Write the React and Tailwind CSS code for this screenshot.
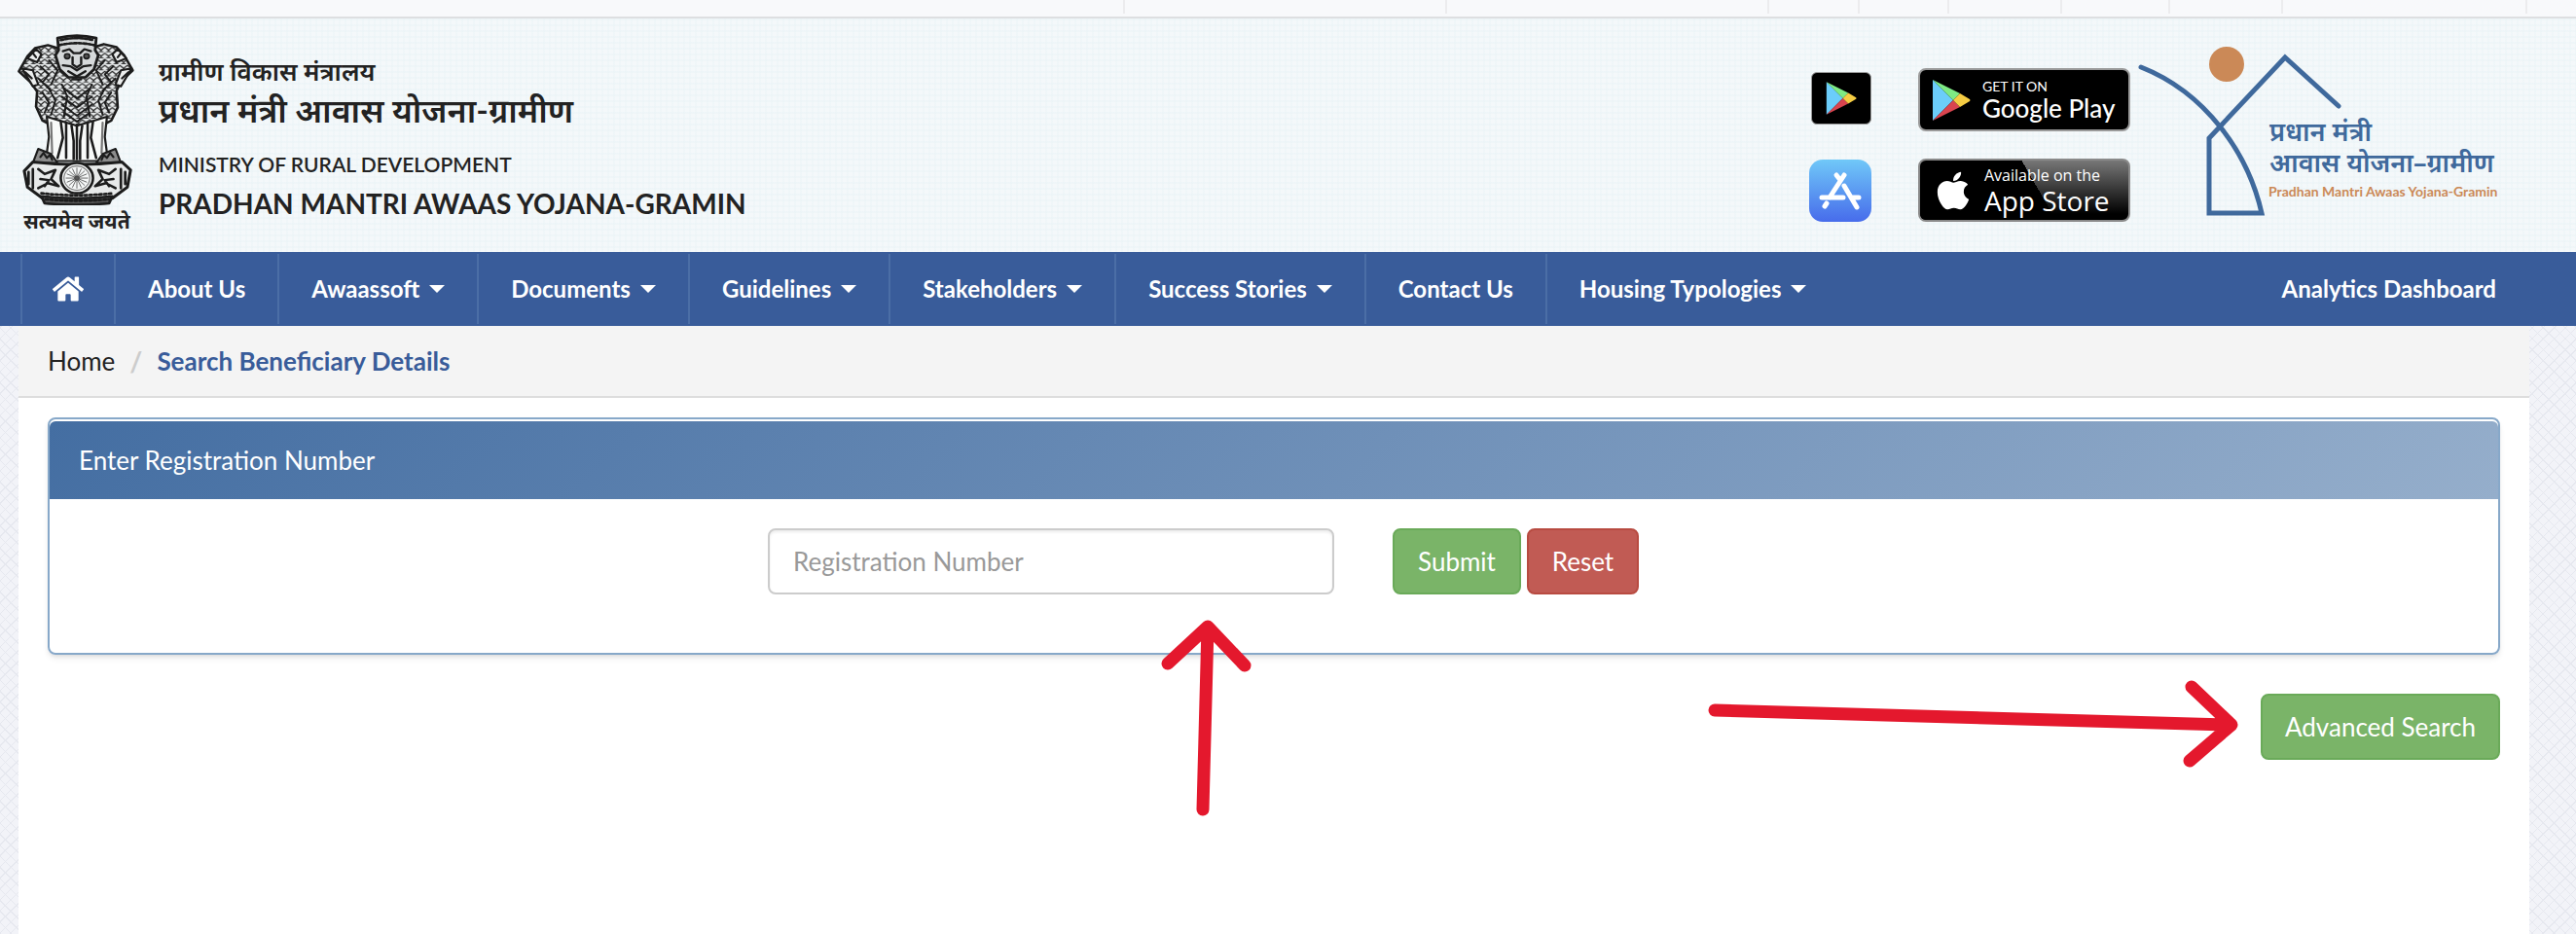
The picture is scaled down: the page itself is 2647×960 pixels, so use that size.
import { FaHome, FaApple } from "react-icons/fa";

const NAV_ITEMS = [
  { label: "About Us" },
  { label: "Awaassoft", menu: true },
  { label: "Documents", menu: true },
  { label: "Guidelines", menu: true },
  { label: "Stakeholders", menu: true },
  { label: "Success Stories", menu: true },
  { label: "Contact Us" },
  { label: "Housing Typologies", menu: true },
];

// cell widths of the strip above the header, left to right
const STRIP_CELLS = ["w-[1156px]", "w-[331px]", "w-[331px]", "w-[93px]", "w-[92px]", "w-[116px]", "w-[111px]", "w-[116px]", "w-[251px]"];

const LION_FUR = [
  "M24 32l8 8-6 8M32 26l8 10-6 14M22 44l12 12M92 32l-8 8 6 8M84 26l-8 10 6 14M94 44l-12 12",
  "M26 58l6 10-4 10M32 54l6 12-4 14M44 50l5 12-3 20M90 58l-6 10 4 10M84 54l-6 12 4 14M72 50l-5 12 3 20",
  "M46 54l12 10 12-10M44 62l14 11 14-11M44 70l14 11 14-11M46 78l12 9 12-9",
];

const BODY = "M40 14l-9-3-12 3-7 8-8 15 11 11 6 9-1 15 6 14 9 5 8 2q15 7 30 0l8-2 9-5 6-13-1-17 4-9 11-11-8-15-7-8-12-3-9 3z";

function Emblem() {
  return (
    <svg viewBox="0 0 116 170" preserveAspectRatio="none" className="h-[176px] w-32 shrink-0" fill="none" stroke="#1c1c1c" strokeLinecap="round" strokeLinejoin="round" aria-hidden="true">
      <defs>
        <pattern id="fur" width="7" height="6" patternUnits="userSpaceOnUse">
          <path d="M0 1l3.5 3L7 1M0 7l3.5-2L7 7" stroke="#1c1c1c" strokeWidth="1.2" />
        </pattern>
      </defs>
      <path d={BODY} fill="#e6e9ea" strokeWidth="2.4" />
      <path d={BODY} fill="url(#fur)" stroke="none" />
      {LION_FUR.map((d) => (
        <path key={d} d={d} strokeWidth="1.8" />
      ))}
      <path d="M7 34l10 2 5 14-5 2zM109 34l-10 2-5 14 5 2zM12 24l9 4 4-8-5-5zM104 24l-9 4-4-8 5-5z" fill="#eceeee" strokeWidth="2" />
      <path d="M10 38l6 6M106 38l-6 6M17 19l3 4M99 19l-3 4" strokeWidth="2" />
      <path d="M40 4q18-5 36 0l-1 12 3 5-4 14-8 8H50l-8-8-4-14 3-5z" fill="#d6d9da" strokeWidth="2.6" />
      <path d="M43 6q15-4 30 0M42 11q16-4 32 0" strokeWidth="2.6" strokeDasharray="2.5 2" />
      <path d="M45 17l6-2 4 4h6l4-4 6 2M54 23v7l4 3 4-3v-7M45 31l7 1 6 4 6-4 7-1M50 37l8 5 8-5M54 45h8" strokeWidth="2.2" />
      <circle cx="49" cy="22" r="2.5" fill="#555" strokeWidth="1.5" />
      <circle cx="67" cy="22" r="2.5" fill="#555" strokeWidth="1.5" />
      <path d="M30 82l2 20-3 24h58l-3-24 2-20-12 4-16 5-16-5z" fill="#f8faf9" strokeWidth="2" />
      <path d="M43 87l2 16-5 20M48 88v35M53 91l2 15v18M58 90v34M63 91l-2 15v18M68 88v35M73 87l-2 16 5 20" strokeWidth="2.3" />
      <path d="M34 88l1 30M82 88l-1 30" strokeWidth="2" stroke="#777" />
      <path d="M22 114l12 5 6 9H17zM94 114l-12 5-6 9h23z" fill="#8c8c8c" strokeWidth="2" />
      <path d="M24 122l3-4 3 5 3-3 2 5M92 122l-3-4-3 5-3-3-2 5" strokeWidth="2" />
      <path d="M17 127q41 5 83 0l8 8-3 17-14 11q-32 5-65 0l-14-11-3-16z" fill="#e8eaea" strokeWidth="2.8" />
      <path d="M25 161l3 7q29 3 60 0l3-7q-33 4-66 0z" fill="#555" strokeWidth="2.5" />
      <path d="M25 158q33 4 67 0M29 164q29 3 59 0" strokeWidth="2.6" strokeDasharray="2 2.5" />
      <circle cx="58" cy="143" r="15" fill="#f4f6f6" strokeWidth="2.4" />
      <circle cx="58" cy="143" r="12" strokeWidth="1" stroke="#777" />
      <circle cx="58" cy="143" r="2" fill="#1c1c1c" />
      <path d="M58 133v20M48 143h20M51 136l14 14M65 136l-14 14M54 134l8 18M62 134l-8 18M49 139l18 8M67 139l-18 8" strokeWidth=".8" stroke="#555" />
      <path d="M22 134l6 5 10-4-4 9 7 7-10-3-9 5M24 144l8 1-4 6M94 134l-6 5-10-4 4 9-7 7 10-3 9 5M92 144l-8 1 4 6M13 137v12M17 134v19M103 137v12M99 134v19" strokeWidth="2.4" />
    </svg>
  );
}

function PlayMark({ className }) {
  return (
    <svg viewBox="0 0 40 44" className={className} aria-hidden="true">
      <path d="M1 1v42l21-21z" fill="#6bcdfa" />
      <path d="M1 1l21 21 7-7z" fill="#7eea84" />
      <path d="M1 43l21-21 7 7z" fill="#d9444f" />
      <path d="M29 15l-7 7 7 7 10-6q1-1 0-2z" fill="#f5cc43" />
    </svg>
  );
}

function AppStoreIcon() {
  return (
    <svg viewBox="0 0 64 64" className="size-16" aria-hidden="true">
      <defs>
        <linearGradient id="appstore" x2="0" y2="1">
          <stop stopColor="#70c8f8" />
          <stop offset="1" stopColor="#476ceb" />
        </linearGradient>
      </defs>
      <rect width="64" height="64" rx="14" fill="url(#appstore)" />
      <path d="M36 16L21 39M28 16l4 5M36 27l13 22M18 45l-2 3M13 39h22M44 39h7" stroke="#fff" strokeWidth="5" strokeLinecap="round" />
    </svg>
  );
}

function SchemeLogo() {
  return (
    <svg viewBox="0 0 390 190" className="h-[190px] w-[390px]" role="img" aria-label="Pradhan Mantri Awaas Yojana-Gramin">
      <circle cx="92" cy="27" r="18" fill="#cb8957" />
      <g fill="none" stroke="#3f699c" strokeWidth="5" strokeLinecap="round">
        <path d="M4 30C70 56 114 118 128 180H74V103L152 20l55 50" />
      </g>
      <g fill="#3f699c" className="font-[Noto_Sans,FreeSans,sans-serif] font-semibold">
        <text x="136" y="106" fontSize="27">प्रधान मंत्री</text>
        <text x="136" y="138" fontSize="27">आवास योजना–ग्रामीण</text>
      </g>
      <text x="135" y="163" fontSize="14" fill="#cb8957" className="font-[Lato,sans-serif] font-bold">Pradhan Mantri Awaas Yojana-Gramin</text>
    </svg>
  );
}

function StoreBadges() {
  return (
    <div className="grid grid-cols-[66px_218px] items-center gap-x-[46px] gap-y-7">
      <a href="#play" aria-label="Play Store" className="mt-1 flex h-[54px] w-[62px] items-center justify-center self-start justify-self-center rounded-md border border-[#9a9a9a] bg-black">
        <PlayMark className="h-9 w-8" />
      </a>
      <a href="#google-play" className="flex h-[65px] items-center gap-3 rounded-lg border-2 border-[#9a9a9a] bg-black pl-3 text-white">
        <PlayMark className="h-[44px] w-10" />
        <span className="font-[Lato,sans-serif]">
          <span className="block text-[14px] leading-4">GET IT ON</span>
          <span className="block text-[26px] leading-7 font-medium">Google Play</span>
        </span>
      </a>
      <a href="#ios" aria-label="App Store">
        <AppStoreIcon />
      </a>
      <a href="#app-store" className="flex h-[65px] items-center rounded-lg border-2 border-[#8a8a8a] bg-black bg-[linear-gradient(to_bottom,#777,#000_90%)] text-white">
        <span className="flex h-full w-full items-center gap-[10px] rounded-md bg-[linear-gradient(60deg,#000_56%,transparent_56%)] pl-3">
          <FaApple className="size-11 shrink-0" />
          <span className="font-[Open_Sans,sans-serif]">
            <span className="block text-[16px] leading-5">Available on the</span>
            <span className="block text-[28px] leading-8 font-medium">App Store</span>
          </span>
        </span>
      </a>
    </div>
  );
}

function Header() {
  return (
    <header className="flex h-[240px] items-start justify-between bg-[#f4f8fa] bg-[linear-gradient(90deg,#eaf3f666_2px,transparent_2px),linear-gradient(#eaf3f688_2px,transparent_2px)] bg-[size:6px_6px] pr-[61px] pl-[19px]">
      <a href="#home" className="flex text-[#222]">
        <span className="flex w-[120px] flex-col items-center pt-4">
          <Emblem />
          <span className="mt-1 text-[21px] leading-6 font-bold">सत्यमेव जयते</span>
        </span>
        <span className="block pt-[34px] pl-6">
          <span className="block text-[26px] leading-10 font-semibold">ग्रामीण विकास मंत्रालय</span>
          <span className="block text-[34px] leading-10 font-semibold">प्रधान मंत्री आवास योजना-ग्रामीण</span>
          <span className="mt-4 block text-[21px] leading-10 font-semibold">MINISTRY OF RURAL DEVELOPMENT</span>
          <span className="block text-[28px] leading-10 font-bold">PRADHAN MANTRI AWAAS YOJANA-GRAMIN</span>
        </span>
      </a>
      <div className="flex">
        <div className="pt-[51px] pr-[7px]">
          <StoreBadges />
        </div>
        <div className="pt-5">
          <SchemeLogo />
        </div>
      </div>
    </header>
  );
}

function Caret() {
  return <span className="border-x-8 border-t-8 border-x-transparent border-t-white" aria-hidden="true" />;
}

function NavBar() {
  return (
    <nav className="flex h-[76px] items-stretch justify-between bg-[#395c9a] py-[2px] pr-[82px] pl-[21px] text-[24px] font-bold text-white">
      <ul className="flex">
        <li className="border-l-2 border-[#4b6ea6]">
          <a href="#home" aria-label="Home" className="flex h-full items-center px-[31px]">
            <FaHome className="size-8" />
          </a>
        </li>
        {NAV_ITEMS.map(({ label, menu }) => (
          <li key={label} className="border-l-2 border-[#4b6ea6]">
            <a href="#menu" className="flex h-full items-center gap-[10px] px-[33px] whitespace-nowrap">
              {label}
              {menu && <Caret />}
            </a>
          </li>
        ))}
      </ul>
      <a href="#analytics" className="flex items-center">Analytics Dashboard</a>
    </nav>
  );
}

function SearchPanel() {
  return (
    <section className="rounded-lg border-2 border-[#87a8c9] shadow-md">
      <h2 className="mt-[2px] flex h-20 items-center rounded-t-md bg-linear-135 from-[#446ea2] to-[#95aecb] pl-[30px] text-[26px] text-white">
        Enter Registration Number
      </h2>
      <form className="flex pt-[30px] pb-[60px] pl-[738px]" onSubmit={(event) => event.preventDefault()}>
        <input
          type="text"
          aria-label="Registration Number"
          placeholder="Registration Number"
          className="h-[68px] w-[582px] rounded-lg border-2 border-[#ccc] bg-white px-6 text-[26px] shadow-[inset_0_2px_3px_#00000014] placeholder:text-[#999]"
        />
        <button type="submit" className="ml-[60px] h-[68px] w-[132px] rounded-lg border-2 border-[#6aaa59] bg-[#7ab468] text-[26px] text-white">Submit</button>
        <button type="reset" className="ml-[6px] h-[68px] w-[115px] rounded-lg border-2 border-[#b84b41] bg-[#c15b54] text-[26px] text-white">Reset</button>
      </form>
    </section>
  );
}

function Arrows() {
  return (
    <svg className="pointer-events-none absolute top-[620px] left-[1180px] h-[230px] w-[1130px]" viewBox="0 0 1130 230" fill="none" stroke="#e4182d" strokeWidth="13" strokeLinecap="round" strokeLinejoin="round" aria-hidden="true">
      <path d="M56 212L61 24M20 62L61 24l38 40" />
      <path d="M582 110l530 15M1072 86l41 39-43 37" />
    </svg>
  );
}

export default function App() {
  return (
    <div className="relative flex min-h-screen flex-col overflow-hidden bg-[#f2f3f8] bg-[repeating-linear-gradient(45deg,#e6e8ef_0_1px,transparent_1px_8px),repeating-linear-gradient(-45deg,#e6e8ef_0_1px,transparent_1px_8px)] font-[Lato,Noto_Sans,sans-serif]">
      <div className="flex h-[19px] border-b-2 border-[#dddfe1] bg-[#f8f9fb]">
        {STRIP_CELLS.map((width, index) => (
          <span key={index} className={`${width} h-[14px] shrink-0 border-r-2 border-[#ececee]`} />
        ))}
      </div>
      <Header />
      <NavBar />
      <main className="mr-12 ml-[19px] grow bg-white">
        <nav aria-label="Breadcrumb" className="flex h-[74px] items-center border-b-2 border-[#ddd] bg-[#f4f4f4] pl-[30px] text-[26px]">
          <a href="#home" className="text-[#222]">Home</a>
          <span className="px-[15px] text-[28px] font-bold text-[#ccc]">/</span>
          <span className="font-bold text-[#395c9a]">Search Beneficiary Details</span>
        </nav>
        <div className="px-[30px] pt-5">
          <SearchPanel />
          <div className="mt-10 flex justify-end">
            <button type="button" className="h-[68px] w-[246px] rounded-lg border-2 border-[#6aaa59] bg-[#7ab468] text-[26px] text-white">Advanced Search</button>
          </div>
        </div>
      </main>
      <Arrows />
    </div>
  );
}
